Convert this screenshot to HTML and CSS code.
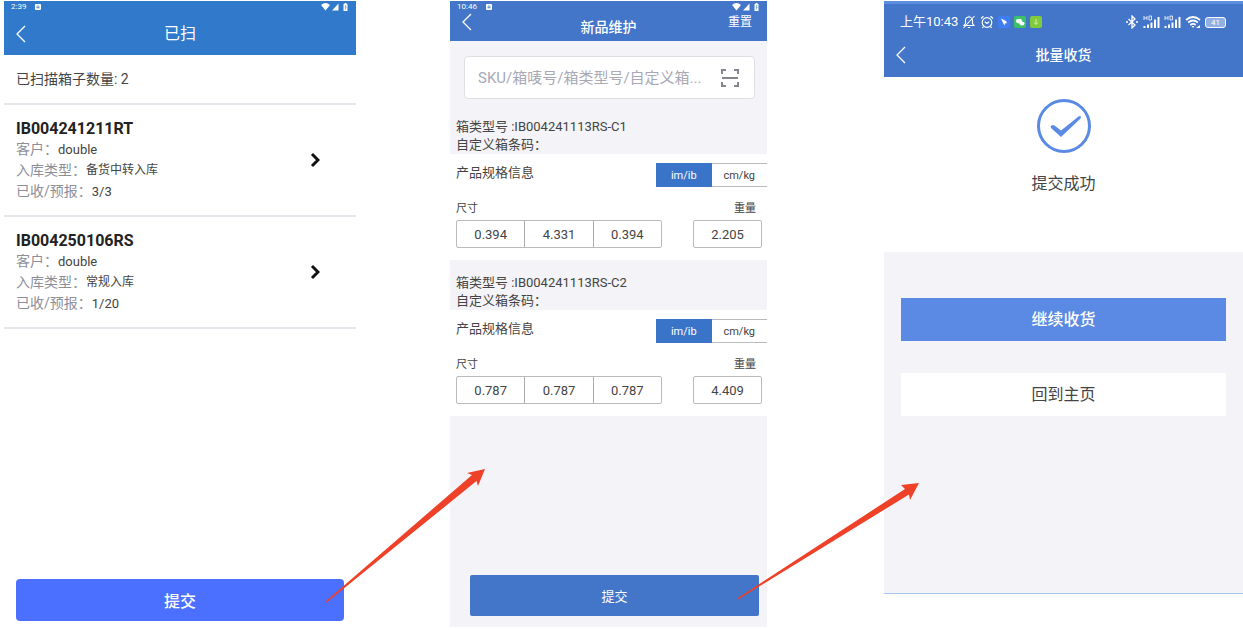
FILE: index.html
```html
<!DOCTYPE html>
<html lang="zh-CN">
<head>
  <meta charset="UTF-8">
  <meta name="viewport" content="width=device-width, initial-scale=1.0">
  <title>收货流程</title>
  <link rel="stylesheet" href="styles.css">
</head>
<body>
  <!-- shared icons -->
  <svg class="defs" width="0" height="0" aria-hidden="true">
    <symbol id="back" viewBox="0 0 10 18"><path d="M9 1 1 9l8 8" fill="none" stroke="currentColor" stroke-width="1.3"/></symbol>
    <symbol id="next" viewBox="0 0 10 16"><path d="m2 2 6 6-6 6" fill="none" stroke="currentColor" stroke-width="3"/></symbol>
    <symbol id="app" viewBox="0 0 8 8"><rect x="1" y="1" width="6" height="6" rx="1" fill="currentColor"/><path d="M3 5.500V3.700a1 1 0 0 1 2 0v1.800M3 4.600h2" fill="none" stroke="#3179cb" stroke-width=".7"/></symbol>
    <symbol id="phone-status" viewBox="0 0 28 10">
      <path d="M0 3q4.500-4 9 0L4.500 8.500zM11 8.500h6.500V1.500zM22.500 2h1V1h2v1h1v7h-4z" fill="currentColor"/>
      <path d="m25 3-1 2.200h1.200L24 7.500" fill="none" stroke="#3179cb" stroke-width=".6"/>
    </symbol>
    <symbol id="signal" viewBox="0 0 17 14">
      <path d="M1 1v4M4 1v4M1 3h3M6 1h2.500v4H6z" fill="none" stroke="currentColor" stroke-width=".8"/>
      <path d="M1.500 13v-2M5 13V9.500M8.500 13V7.500M12 13V4.500M15.500 13V2" stroke="currentColor" stroke-width="2"/>
    </symbol>
  </svg>

  <div class="board">
    <!-- 已扫 -->
    <section class="screen scanned">
      <header class="header">
        <div class="status">
          <span>2:39</span>
          <svg class="app"><use href="#app"/></svg>
          <svg class="phone-status"><use href="#phone-status"/></svg>
        </div>
        <div class="title-bar">
          <button class="back" aria-label="返回"><svg><use href="#back"/></svg></button>
          <h1>已扫</h1>
        </div>
      </header>
      <p class="count">已扫描箱子数量: 2</p>
      <ul class="boxes">
        <li>
          <div class="box-info">
            <h2>IB004241211RT</h2>
            <p><span>客户：</span><b class="latin">double</b></p>
            <p><span>入库类型：</span><b>备货中转入库</b></p>
            <p><span>已收/预报：</span><b class="latin">3/3</b></p>
          </div>
          <button class="open" aria-label="查看"><svg><use href="#next"/></svg></button>
        </li>
        <li>
          <div class="box-info">
            <h2>IB004250106RS</h2>
            <p><span>客户：</span><b class="latin">double</b></p>
            <p><span>入库类型：</span><b>常规入库</b></p>
            <p><span>已收/预报：</span><b class="latin">1/20</b></p>
          </div>
          <button class="open" aria-label="查看"><svg><use href="#next"/></svg></button>
        </li>
      </ul>
      <button class="submit">提交</button>
    </section>

    <!-- 新品维护 -->
    <section class="screen product">
      <header class="header">
        <div class="status">
          <span>10:46</span>
          <svg class="app"><use href="#app"/></svg>
          <svg class="phone-status"><use href="#phone-status"/></svg>
        </div>
        <div class="title-bar">
          <button class="back" aria-label="返回"><svg><use href="#back"/></svg></button>
          <h1>新品维护</h1>
          <button class="reset">重置</button>
        </div>
      </header>
      <div class="search">
        <input type="text" aria-label="搜索" placeholder="SKU/箱唛号/箱类型号/自定义箱...">
        <button class="scan" aria-label="扫码">
          <svg viewBox="0 0 20 20"><path d="M2 6V2h4M14 2h4v4M18 14v4h-4M6 18H2v-4M2 10h16" fill="none" stroke="currentColor" stroke-width="2"/></svg>
        </button>
      </div>

      <div class="group-head">
        <p>箱类型号 :IB004241113RS-C1</p>
        <p>自定义箱条码：</p>
      </div>
      <div class="spec">
        <div class="spec-title">
          <h2>产品规格信息</h2>
          <div class="units">
            <button class="active" aria-pressed="true">im/ib</button>
            <button aria-pressed="false">cm/kg</button>
          </div>
        </div>
        <div class="spec-labels"><label for="len1">尺寸</label><label for="weight1">重量</label></div>
        <div class="spec-fields">
          <div class="size">
            <input id="len1" type="text" value="0.394">
            <input type="text" aria-label="宽" value="4.331">
            <input type="text" aria-label="高" value="0.394">
          </div>
          <input id="weight1" class="weight" type="text" value="2.205">
        </div>
      </div>

      <div class="group-head">
        <p>箱类型号 :IB004241113RS-C2</p>
        <p>自定义箱条码：</p>
      </div>
      <div class="spec">
        <div class="spec-title">
          <h2>产品规格信息</h2>
          <div class="units">
            <button class="active" aria-pressed="true">im/ib</button>
            <button aria-pressed="false">cm/kg</button>
          </div>
        </div>
        <div class="spec-labels"><label for="len2">尺寸</label><label for="weight2">重量</label></div>
        <div class="spec-fields">
          <div class="size">
            <input id="len2" type="text" value="0.787">
            <input type="text" aria-label="宽" value="0.787">
            <input type="text" aria-label="高" value="0.787">
          </div>
          <input id="weight2" class="weight" type="text" value="4.409">
        </div>
      </div>
      <button class="submit">提交</button>
    </section>

    <!-- 批量收货 -->
    <section class="screen receive">
      <header class="header">
        <div class="status">
          <span>上午10:43</span>
          <svg viewBox="0 0 14 14"><path d="M2 10.500h10L10.500 8.500V5.500a3.500 3.500 0 0 0-7 0v3zM7 2V.8M5.800 12.500h2.400M12.500 1 1.500 13" fill="none" stroke="currentColor" stroke-width="1.100"/></svg>
          <svg viewBox="0 0 14 14"><g fill="none" stroke="currentColor" stroke-width="1.200"><circle cx="7" cy="7.500" r="4.800"/><path d="M1 3.500 3.500 1.200M13 3.500l-2.500-2.300M4.800 6.800 7 8.500l2.200-1.700M3.500 11.500l-1 1.500M10.500 11.500l1 1.500"/></g></svg>
          <svg class="badge" viewBox="0 0 12 12"><rect width="12" height="12" rx="2" fill="#3f7df5"/><path d="m3 2.500 5 2.500 1 2-2 .5L6.500 9.500 5 7z" fill="#fff"/></svg>
          <svg class="badge" viewBox="0 0 12 12"><rect width="12" height="12" rx="2" fill="#3cc169"/><ellipse cx="5" cy="5" rx="3" ry="2.300" fill="#fff"/><ellipse cx="8" cy="7.500" rx="2.500" ry="1.900" fill="#fff"/></svg>
          <svg class="badge" viewBox="0 0 12 12"><rect width="12" height="12" rx="2" fill="#7fcb3b"/><path d="M6 3v5M4 6.500l2 2 2-2" fill="none" stroke="#d9f2a8"/></svg>
          <span class="spacer"></span>
          <svg viewBox="0 0 14 14"><path d="m3.500 4 6.500 6-3 3V1l3 3-6.500 6" fill="none" stroke="currentColor" stroke-width="1.300"/><circle cx="2" cy="7" r="1" fill="currentColor"/><circle cx="12" cy="7" r="1" fill="currentColor"/></svg>
          <svg class="signal"><use href="#signal"/></svg>
          <svg class="signal"><use href="#signal"/></svg>
          <svg class="wifi" viewBox="0 0 16 14"><g fill="none" stroke="currentColor" stroke-width="1.700"><path d="M1 5q7-6 14 0M3.200 7.500q4.800-4 9.600 0M5.300 10q2.700-2.200 5.400 0"/></g><path d="m6.500 11 1.500 2 1.500-2zM11 13h4v-3z" fill="currentColor"/></svg>
          <span class="battery">41</span>
        </div>
        <div class="title-bar">
          <button class="back" aria-label="返回"><svg><use href="#back"/></svg></button>
          <h1>批量收货</h1>
        </div>
      </header>
      <div class="result">
        <svg viewBox="0 0 54 54"><circle cx="27" cy="27" r="25.500" fill="none" stroke="#5a8ae3" stroke-width="3"/><path d="M14.500 26.500q1.500-1 3 0l6.500 5L41.500 17.500q2-1 2.500.500 0 1-1 2L24 38 14 29q-1-1.500.500-2.500z" fill="#5a8ae3"/></svg>
        <p>提交成功</p>
      </div>
      <div class="actions">
        <button class="primary">继续收货</button>
        <button>回到主页</button>
      </div>
    </section>

    <svg class="arrows" viewBox="0 0 1243 630" preserveAspectRatio="none" aria-hidden="true">
      <path d="M325.500 601.500 472 475l-5-2 18-4-7 17-1.500-5L326.500 602.500zM737 598.500 905 489l-4-4 18-2-9 17-1-5.500L737.500 599.800z"/>
    </svg>
  </div>
</body>
</html>
```

FILE: styles.css
```css
* {
  margin: 0;
  padding: 0;
  box-sizing: border-box;
}

body {
  background: #fff;
  color: #444;
  font-family: Roboto, "Noto Sans CJK SC", sans-serif;
  font-size: 13px;
}

button, input {
  font: inherit;
  color: inherit;
  border: none;
  background: none;
}

button {
  cursor: pointer;
}

ul {
  list-style: none;
}

svg {
  display: block;
}

.defs {
  position: absolute;
}

.board {
  position: relative;
  display: grid;
  grid-template-columns: 352fr 94fr 317fr 117fr 359fr;
  min-height: 100vh;
  padding: 1px 0 0 4px;
}

.screen {
  display: flex;
  flex-direction: column;
  min-width: 0;
}

/* headers */
.header {
  color: #fff;
  background: #4375c9;
}

.status {
  display: flex;
  align-items: center;
  height: 12px;
  padding: 0 7px;
  font-size: 8px;
  line-height: 12px;
}

.app {
  width: 8px;
  height: 8px;
  margin-left: 8px;
}

.phone-status {
  width: 28px;
  height: 10px;
  margin-left: auto;
}

.title-bar {
  display: grid;
  grid-template-columns: 1fr auto 1fr;
  align-items: center;
}

.title-bar h1 {
  font-size: 14px;
  font-weight: 500;
  line-height: 20px;
}

.back {
  justify-self: start;
  padding: 0 12px;
}

.back svg {
  width: 10px;
  height: 18px;
}

/* scanned list */
.scanned .header {
  background: #3179cb;
}

.scanned .title-bar {
  height: 42px;
}

.scanned h1 {
  font-size: 16px;
  font-weight: 400;
}

.count {
  padding: 14px 12px;
  border-bottom: 2px solid #e6e6ec;
  font-size: 14px;
  line-height: 20px;
}

.boxes li {
  display: flex;
  align-items: center;
  justify-content: space-between;
  padding: 13px 36px 13px 12px;
  border-bottom: 2px solid #e6e6ec;
}

.box-info {
  font-size: 12px;
  line-height: 21px;
}

.box-info h2 {
  color: #222;
  font-size: 16px;
  line-height: 21px;
}

.box-info p {
  display: flex;
}

.box-info span {
  color: #8e8e99;
  font-size: 14px;
}

.box-info b {
  font-weight: 400;
}

.box-info .latin {
  font-size: 13px;
}

.open {
  color: #111;
}

.open svg {
  width: 10px;
  height: 16px;
}

.submit {
  color: #fff;
}

.scanned .submit {
  height: 42px;
  margin: auto 12px 9px;
  border-radius: 4px;
  background: #4b70ff;
  font-size: 16px;
  font-weight: 500;
}

/* product maintenance */
.product {
  grid-column: 3;
  margin-bottom: 3px;
  background: #f3f3f8;
}

.product .title-bar {
  height: 28px;
}

.product .back,
.product .reset {
  align-self: start;
}

.reset {
  justify-self: end;
  padding: 0 15px;
  font-size: 12px;
  line-height: 18px;
}

.search {
  display: flex;
  align-items: center;
  height: 43px;
  margin: 15px 12px 5px 14px;
  padding: 0 14px 0 13px;
  border: 1px solid #dedee4;
  border-radius: 4px;
  background: #fff;
}

.search input {
  flex: 1;
  min-width: 0;
  font-size: 15px;
  outline: none;
}

.search input::placeholder {
  color: #a9a9b5;
}

.scan {
  color: #85858f;
}

.scan svg {
  width: 20px;
  height: 20px;
}

.group-head {
  padding: 14px 6px 0;
  line-height: 18px;
}

.spec {
  padding: 9px 0 12px 6px;
  background: #fff;
}

.spec-title {
  display: flex;
  justify-content: space-between;
}

.spec-title h2 {
  font-size: 13px;
  font-weight: 400;
  line-height: 20px;
}

.units {
  display: flex;
  width: 111px;
}

.units button {
  flex: 1;
  height: 24px;
  border: 1px solid #bbb;
  border-width: 1px 0;
  font-size: 11px;
}

.units .active {
  border-color: #3a74c9;
  color: #fff;
  background: #3a74c9;
}

.spec-labels {
  display: flex;
  justify-content: space-between;
  padding: 14px 11px 3px 0;
  font-size: 11px;
  line-height: 16px;
}

.spec-fields {
  display: flex;
  justify-content: space-between;
  padding-right: 5px;
}

.size {
  display: flex;
  width: 206px;
  border: 1px solid #bbb;
  border-radius: 2px;
}

.size input {
  flex: 1;
  min-width: 0;
  height: 26px;
  text-align: center;
}

.size input + input {
  border-left: 1px solid #aaa;
}

.weight {
  width: 69px;
  border: 1px solid #bbb;
  border-radius: 2px;
  text-align: center;
}

.product .submit {
  height: 41px;
  margin: auto 8px 11px 20px;
  border-radius: 2px;
  background: #4375c9;
}

/* receive result */
.receive {
  grid-column: 5;
  margin-bottom: 36px;
  border-bottom: 1px solid #a9c8ee;
  background: #f3f3f8;
}

.receive .header {
  border-top: 3px solid #5a8fe0;
}

.receive .status {
  gap: 4px;
  height: 36px;
  padding: 0 17px 0 16px;
  font-size: 13px;
}

.receive .status svg {
  width: 14px;
  height: 14px;
}

.receive .status .badge {
  width: 12px;
  height: 12px;
}

.receive .status .signal {
  width: 17px;
}

.receive .status .wifi {
  width: 16px;
}

.spacer {
  flex: 1;
}

.battery {
  width: 21px;
  height: 11px;
  border: 1px solid #fff;
  border-radius: 3px;
  background: #8fb0e4;
  font-size: 8px;
  line-height: 9px;
  text-align: center;
}

.receive .title-bar {
  height: 37px;
  padding-bottom: 7px;
}

.result {
  display: flex;
  flex-direction: column;
  align-items: center;
  height: 175px;
  padding-top: 22px;
  background: #fff;
  font-size: 16px;
  line-height: 24px;
}

.result svg {
  width: 54px;
  height: 54px;
  margin-bottom: 19px;
}

.actions {
  display: flex;
  flex-direction: column;
  gap: 32px;
  padding: 46px 17px 0;
}

.actions button {
  height: 43px;
  padding-bottom: 3px;
  background: #fff;
  font-size: 16px;
}

.actions .primary {
  color: #fff;
  background: #5a8ae3;
  font-weight: 500;
}

/* flow arrows drawn over the screens */
.arrows {
  position: absolute;
  inset: 0;
  width: 100%;
  height: 100%;
  fill: #ee4128;
  pointer-events: none;
}
```
